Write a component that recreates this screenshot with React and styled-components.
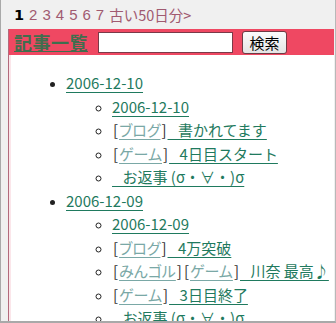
import React from "react";
import styled, { createGlobalStyle } from "styled-components";

const Global = createGlobalStyle`
  html, body { margin: 0; padding: 0; background: #f0f0f0; }
  body { font-family: "Noto Sans CJK JP", "DejaVu Sans", sans-serif; }
`;

const Frame = styled.div`
  box-sizing: border-box;
  width: 336px;
  height: 323px;
  overflow: hidden;
  background: #f0f0f0;
  border-left: 1px solid #a9a9a9;
  border-right: 1px solid #b8b8b8;
  border-bottom: 2px solid #a9a9a9;
  padding: 0 1px 0 7px;
  display: flex;
  flex-direction: column;
`;

const Pager = styled.div`
  height: 29px;
  display: flex;
  align-items: center;
  gap: 5px;
  padding-left: 6px;
  font-size: 14.5px;
  color: #a05a70;
`;

const PageCur = styled.span`
  font-weight: bold;
  color: #000;
  font-family: "DejaVu Sans", sans-serif;
`;

const PageLink = styled.span`
  font-family: "Liberation Sans", sans-serif;
  font-size: 15px;
`;

const Panel = styled.div`
  flex: 1;
  display: flex;
  flex-direction: column;
  border-left: 1px solid #b36a7c;
  background: #fff;
  min-height: 0;
`;

const Header = styled.div`
  height: 29px;
  background: #ef4862;
  display: flex;
  align-items: center;
  padding-left: 5px;
`;

const Title = styled.span`
  font-size: 18px;
  font-weight: bold;
  color: #3f6e4e;
  text-decoration: underline;
  letter-spacing: 0.5px;
  margin-right: 10px;
`;

const Input = styled.input`
  box-sizing: border-box;
  width: 135px;
  height: 21px;
  border: 1px solid #7a3a48;
  background: #fff;
  margin-right: 9px;
`;

const Button = styled.button`
  box-sizing: border-box;
  width: 45px;
  height: 23px;
  padding: 0;
  font-family: "Noto Sans CJK JP", sans-serif;
  font-size: 15px;
  line-height: 1;
  color: #000;
  border: 1px solid #6e3a44;
  border-radius: 3px;
  background: linear-gradient(#fbfbfb, #e4e4e4);
`;

const Body = styled.div`
  flex: 1;
  border-left: 2px solid #fbe6ea;
  padding-top: 16px;
`;

const List = styled.ul`
  margin: 0;
  padding-left: ${(p) => p.$indent}px;
  list-style-type: ${(p) => p.$type};
  font-size: 15px;
  line-height: 23.5px;
  white-space: nowrap;
`;

const Item = styled.li`
  color: #222;
  &::marker { color: #222; font-size: 12px; }
`;

const Link = styled.a`
  color: #1f7a5e;
  text-decoration: underline;
  text-underline-offset: 3px;
  white-space: pre;
  cursor: pointer;
`;

const Cat = styled.a`
  color: #7aa8a6;
  text-decoration: underline;
  text-underline-offset: 3px;
  font-feature-settings: "palt";
`;

const Bracket = styled.span`
  color: #333;
  padding: 0 1px;
`;

const LEAD = "\u2002\u2009";

const Dates = [
  {
    date: "2006-12-10",
    items: [
      { cats: [], title: "2006-12-10" },
      { cats: ["ブログ"], title: LEAD + "書かれてます" },
      { cats: ["ゲーム"], title: LEAD + "4日目スタート" },
      { cats: [], title: LEAD + "お返事 (σ・∀・)σ" },
    ],
  },
  {
    date: "2006-12-09",
    items: [
      { cats: [], title: "2006-12-09" },
      { cats: ["ブログ"], title: LEAD + "4万突破" },
      { cats: ["みんゴル", "ゲーム"], title: LEAD + "川奈 最高♪" },
      { cats: ["ゲーム"], title: LEAD + "3日目終了" },
      { cats: [], title: LEAD + "お返事 (σ・∀・)σ" },
    ],
  },
];

export default function App() {
  return (
    <>
      <Global />
      <Frame>
        <Pager>
          <PageCur>1</PageCur>
          {[2, 3, 4, 5, 6, 7].map((n) => (
            <PageLink key={n}>{n}</PageLink>
          ))}
          <span>古い50日分&gt;</span>
        </Pager>
        <Panel>
          <Header>
            <Title>記事一覧</Title>
            <Input />
            <Button>検索</Button>
          </Header>
          <Body>
            <List $indent={55} $type="disc">
              {Dates.map((d) => (
                <Item key={d.date}>
                  <Link>{d.date}</Link>
                  <List $indent={46} $type="circle">
                    {d.items.map((it, i) => (
                      <Item key={i}>
                        {it.cats.map((c) => (
                          <React.Fragment key={c}>
                            <Bracket>[</Bracket>
                            <Cat>{c}</Cat>
                            <Bracket>]</Bracket>
                          </React.Fragment>
                        ))}
                        <Link>{it.title}</Link>
                      </Item>
                    ))}
                  </List>
                </Item>
              ))}
            </List>
          </Body>
        </Panel>
      </Frame>
    </>
  );
}
